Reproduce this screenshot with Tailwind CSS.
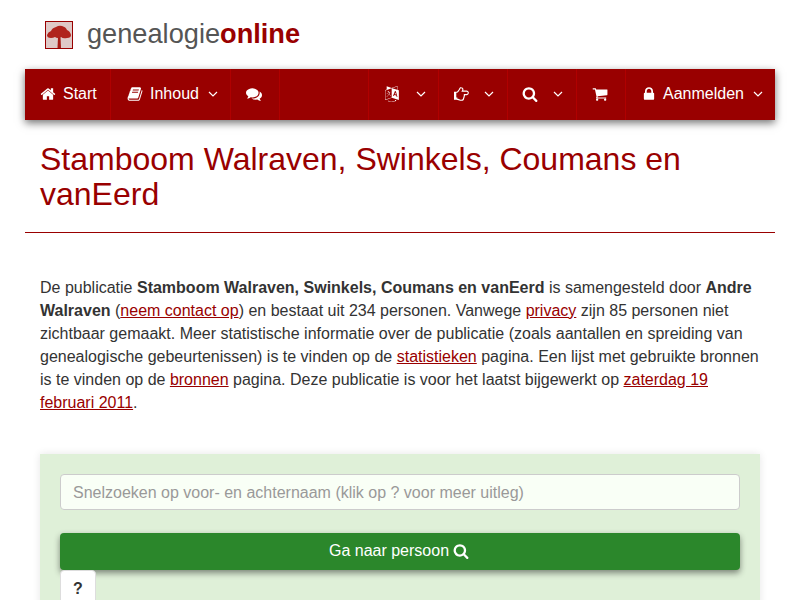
<!DOCTYPE html>
<html lang="nl">
<head>
<meta charset="utf-8">
<title>Stamboom</title>
<script src="https://cdn.jsdelivr.net/npm/@tailwindcss/browser@4"></script>
</head>
<body class="bg-white">
<div class="h-[600px] overflow-hidden font-['Liberation_Sans',Arial,sans-serif] text-[16px] leading-[23px] text-[#333]">
  <header class="h-[69px] pl-[45px] flex items-start">
    <div class="mt-[21px] w-[28px] h-[28px] border border-[#990000] bg-[#dfc9c7] flex items-center justify-center shrink-0 overflow-hidden">
      <svg viewBox="0 0 26 26" class="w-[26px] h-[26px] blur-[0.5px]"><path d="M12 15h2.500l.5 11h-3.500z" fill="#a81c16"/><path d="M1 13q1-3 4-4 1-3 5-4 3-2 6-1 4 1 5 4 3 1 4 5 0 3-4 3-4 1-6-1-2 1-3 1-2 0-3-1-2 1-4 1-4 0-4-3z" fill="#b0231c"/></svg>
    </div>
    <div class="ml-[14px] mt-[17px] text-[27.200px] leading-[34px] text-[#555]">genealogie<b class="text-[#990000]">online</b></div>
  </header>

  <nav class="mx-[25px] h-[51px] bg-[#990000] text-white flex shadow-[0_3px_8px_rgba(0,0,0,0.55)]">
    <a class="w-[86px] flex items-center pl-[15px] pb-[2px] gap-[7px] border-r border-[#b00000]">
      <svg viewBox="0 0 1792 1792" class="w-[16px] h-[16px]" fill="#fff"><path d="M1472 992v480q0 26-19 45t-45 19h-384v-384h-256v384h-384q-26 0-45-19t-19-45v-480q0-1 .5-3t.5-3l575-474 575 474q1 2 1 6zm223-69l-62 74q-8 9-21 11h-3q-13 0-21-7l-692-577-692 577q-12 8-24 7-13-2-21-11l-62-74q-8-10-7-23.500t11-21.500l719-599q32-26 76-26t76 26l244 204v-195q0-14 9-23t23-9h192q14 0 23 9t9 23v408l219 182q10 8 11 21.500t-7 23.500z"/></svg>
      <span>Start</span>
    </a>
    <a class="w-[120px] flex items-center pl-[16px] pb-[2px] border-r border-[#b00000]">
      <svg viewBox="0 0 1792 1792" class="w-[16px] h-[16px] mr-[7px]" fill="#fff"><path d="M1703 478q40 57 18 129l-275 906q-19 64-76.500 107.500t-122.500 43.500h-923q-77 0-148.500-53.500t-99.500-131.500q-24-67-2-127 0-4 3-27t4-37q1-8-3-21.500t-3-19.500q2-11 8-21t16.500-23.500 16.500-23.500q23-38 45-91.500t30-91.500q3-10 .5-30t-.5-28q3-11 17-28t17-23q21-36 42-92t25-90q1-9-2.500-32t.5-28q4-13 22-30.500t22-22.500q19-26 42.500-84.500t27.500-96.500q1-8-3-25.500t-2-26.500q2-8 9-18t18-23 17-21q8-12 16.500-30.500t15-35 16-36 19.500-32 26.500-23.500 36-11.500 47.500 5.500l-1 3q38-9 51-9h761q74 0 114 56t18 130l-274 906q-36 119-71.500 153.500t-128.500 34.500h-869q-27 0-38 15-11 16-1 43 24 70 144 70h923q29 0 56-15.500t35-41.500l300-987q7-22 5-57 38 15 59 43zm-1064 2q-4 13 2 22.500t20 9.500h608q13 0 25.500-9.500t16.500-22.500l21-64q4-13-2-22.500t-20-9.500h-608q-13 0-25.500 9.500t-16.500 22.500zm-83 256q-4 13 2 22.500t20 9.500h608q13 0 25.500-9.500t16.500-22.500l21-64q4-13-2-22.500t-20-9.500h-608q-13 0-25.500 9.500t-16.500 22.500z"/></svg>
      <span>Inhoud</span>
      <svg viewBox="0 0 10 6" class="w-[10px] h-[6px] ml-[9px]" fill="none" stroke="#fff" stroke-width="1.200"><path d="M1 1l4 4 4-4"/></svg>
    </a>
    <a class="w-[49px] flex items-center justify-center pb-[2px] pr-[2px] border-r border-[#b00000]">
      <svg viewBox="0 0 1792 1792" class="w-[16px] h-[16px]" fill="#fff"><path d="M1408 768q0 139-94 257t-256.500 186.500-353.500 68.500q-86 0-176-16-124 88-278 128-36 9-86 16h-3q-11 0-20.500-8t-11.500-21q-1-3-1-6.500t.5-6.500 2-6l2.500-5 3.500-5.500 4-5 4.500-5 4-4.500q5-6 23-25t26-29.500 22.500-29 25-38.500 20.500-44q-124-72-195-177t-71-224q0-139 94-257t256.500-186.500 353.500-68.500 353.500 68.500 256.500 186.500 94 257zm384 256q0 120-71 224.500t-195 176.500q10 24 20.500 44t25 38.500 22.500 29 26 29.500 23 25q1 1 4 4.500t4.500 5 4 5 3.500 5.500l2.500 5 2 6 .5 6.500-1 6.500q-3 14-13 22t-22 7q-50-7-86-16-154-40-278-128-90 16-176 16-271 0-472-132 58 4 88 4 161 0 309-45t264-129q125-92 192-212t67-254q0-77-23-152 129 71 204 178t75 230z"/></svg>
    </a>
    <div class="flex-1 border-r border-[#b00000]"></div>
    <a class="w-[70px] flex items-center pl-[15px] pb-[2px] border-r border-[#b00000]">
      <svg viewBox="0 0 1792 1792" class="w-[16px] h-[16px] mr-[16px]" fill="#fff"><path d="M782 1078q-1 3-12.500-.5t-31.500-11.500l-20-9q-44-20-87-49-7-5-41-31.500t-38-28.500q-67 103-134 181-81 95-105 110-4 2-19.500 4t-18.500 0q6-4 82-92 21-24 85.500-115t78.500-118q17-30 51-98.500t36-77.500q-8-1-110 33-8 2-27.500 7.500t-34.500 9.500-17 5q-2 2-2 10.500t-1 9.500q-5 10-31 15-23 7-47 0-18-4-28-21-4-6-5-23 6-2 24.500-5t29.500-6q58-16 105-32 100-35 102-35 10-2 43-19.500t44-21.500q9-3 21.500-8t14.500-5.500 6 .5q2 12-1 33 0 2-12.500 27t-26.500 53.500-17 33.500q-25 50-77 131l64 28q12 6 74.500 32t67.500 28q4 1 10.500 25.500t4.500 30.500zm-205-486q3 15-4 28-12 23-50 38-30 12-60 12-26-3-49-26-14-15-18-41l1-3q3 3 19.500 5t26.500 0 58-16q36-12 55-14 17 0 21 17zm698 129l63 227-139-42zm-1108 800l694-232v-1032l-694 233v1031zm1241-317l102 31-181-657-100-31-216 536 102 31 45-110 211 65zm-503-962l573 184v-380zm311 1323l158 13-54 160-40-66q-130 83-276 108-58 12-91 12h-84q-79 0-199.500-39t-183.500-85q-8-7-8-16 0-8 5-13.500t13-5.500q4 0 18 7.500t30.500 16.500 20.500 11q73 37 159.500 61.500t157.500 24.500q95 0 167-14.500t157-50.500q15-7 30.500-15.500t34-19 28.500-16.500zm448-1079v1079l-774-246q-14 6-375 127.500t-368 121.500q-13 0-18-13 0-1-1-3v-1078q3-9 4-10 5-6 20-11 106-35 149-50v-384l558 198q2 0 160.500-55t316-108.500 161.500-53.500q20 0 20 21v418z"/></svg>
      <svg viewBox="0 0 10 6" class="w-[10px] h-[6px]" fill="none" stroke="#fff" stroke-width="1.200"><path d="M1 1l4 4 4-4"/></svg>
    </a>
    <a class="w-[69px] flex items-center pl-[15px] pb-[2px] border-r border-[#b00000]">
      <svg viewBox="0 0 1792 1792" class="w-[16px] h-[16px] mr-[14px]" fill="#fff"><path d="M384 1344q0-26-19-45t-45-19-45 19-19 45 19 45 45 19 45-19 19-45zm1152-576q0-51-39-89.500t-89-38.500h-576q0-20 15-48.500t33-55 33-68 15-84.500q0-67-44.500-97.500t-115.500-30.500q-24 0-90 139-24 44-37 65-40 64-112 145-71 81-101 106-69 57-140 57h-32v640h32q72 0 167 32t193.500 64 179.500 32q189 0 189-167 0-26-5-56 30-16 47.500-52.500t17.500-73.500-18-69q53-50 53-119 0-25-10-55.500t-25-47.500h331q52 0 90-38t38-90zm128-1q0 105-75.500 181t-180.500 76h-169q-4 62-37 119 3 21 3 43 0 101-60 178 1 139-85 219.500t-227 80.500q-133 0-322-69-164-59-223-59h-288q-53 0-90.500-37.500t-37.500-90.500v-640q0-53 37.500-90.500t90.500-37.500h288q10 0 21.500-4.500t23.500-14 22.500-18 24-22.500 20.500-21.500 19-21.500 14-17q65-74 100-129 13-21 33-62t37-72 40.500-63 55-49.500 69.500-17.500q125 0 206.500 67t81.500 189q0 68-22 128h374q104 0 180 76t76 179z"/></svg>
      <svg viewBox="0 0 10 6" class="w-[10px] h-[6px]" fill="none" stroke="#fff" stroke-width="1.200"><path d="M1 1l4 4 4-4"/></svg>
    </a>
    <a class="w-[69px] flex items-center pl-[14px] pb-[2px] border-r border-[#b00000]">
      <svg viewBox="0 0 1792 1792" class="w-[16px] h-[16px] mr-[15px]" fill="#fff"><path d="M1216 832q0-185-131.500-316.500t-316.500-131.500-316.500 131.500-131.500 316.500 131.500 316.500 316.500 131.500 316.500-131.500 131.500-316.500zm512 832q0 52-38 90t-90 38q-54 0-90-38l-343-342q-179 124-399 124-143 0-273.500-55.500t-225-150-150-225-55.500-273.500 55.500-273.500 150-225 225-150 273.500-55.500 273.500 55.500 225 150 150 225 55.500 273.500q0 220-124 399l343 343q37 37 37 90z"/></svg>
      <svg viewBox="0 0 10 6" class="w-[10px] h-[6px]" fill="none" stroke="#fff" stroke-width="1.200"><path d="M1 1l4 4 4-4"/></svg>
    </a>
    <a class="w-[49px] flex items-center pl-[15px] pb-[2px] border-r border-[#b00000]">
      <svg viewBox="0 0 1792 1792" class="w-[16px] h-[16px]" fill="#fff"><path d="M704 1536q0 52-38 90t-90 38-90-38-38-90 38-90 90-38 90 38 38 90zm896 0q0 52-38 90t-90 38-90-38-38-90 38-90 90-38 90 38 38 90zm128-1088v512q0 24-16.500 42.500t-40.500 21.500l-1044 122q13 60 13 70 0 16-24 64h920q26 0 45 19t19 45-19 45-45 19h-1024q-26 0-45-19t-19-45q0-11 8-31.500t16-36 21.500-40 15.500-29.500l-177-823h-204q-26 0-45-19t-19-45 19-45 45-19h256q16 0 28.500 6.500t19.500 15.500 13 24.500 8 26 5.500 29.500 4.500 26h1201q26 0 45 19t19 45z"/></svg>
    </a>
    <a class="w-[149px] flex items-center pl-[15px] pb-[2px]">
      <svg viewBox="0 0 1792 1792" class="w-[16px] h-[16px] mr-[6px]" fill="#fff"><path d="M640 768h512v-192q0-106-75-181t-181-75-181 75-75 181v192zm832 96v576q0 40-28 68t-68 28h-960q-40 0-68-28t-28-68v-576q0-40 28-68t68-28h32v-192q0-184 132-316t316-132 316 132 132 316v192h32q40 0 68 28t28 68z"/></svg>
      <span>Aanmelden</span>
      <svg viewBox="0 0 10 6" class="w-[10px] h-[6px] ml-[9px]" fill="none" stroke="#fff" stroke-width="1.200"><path d="M1 1l4 4 4-4"/></svg>
    </a>
  </nav>

  <section class="mx-[25px] h-[113px] border-b border-[#990000] px-[15px] pt-[22px]">
    <h1 class="text-[32px] leading-[35px] text-[#990000] font-normal">Stamboom Walraven, Swinkels, Coumans en vanEerd</h1>
  </section>

  <p class="mt-[43px] mx-[40px] w-[720px]">De publicatie <b>Stamboom Walraven, Swinkels, Coumans en vanEerd</b> is samengesteld door <b>Andre Walraven</b> (<a class="text-[#990000] underline">neem contact op</a>) en bestaat uit 234 personen. Vanwege <a class="text-[#990000] underline">privacy</a> zijn 85 personen niet zichtbaar gemaakt. Meer statistische informatie over de publicatie (zoals aantallen en spreiding van genealogische gebeurtenissen) is te vinden op de <a class="text-[#990000] underline">statistieken</a> pagina. Een lijst met gebruikte bronnen is te vinden op de <a class="text-[#990000] underline">bronnen</a> pagina. Deze publicatie is voor het laatst bijgewerkt op <a class="text-[#990000] underline">zaterdag 19 februari 2011</a>.</p>

  <section class="mt-[40px] mx-[40px] bg-[#dff0d8] px-[20px] pt-[20px] h-[200px] shadow-[0_0_8px_rgba(0,0,0,0.1)]">
    <div class="h-[36px] bg-[#f9fff6] border border-[#ccc] rounded-[4px] px-[12px] flex items-center text-[#999]">Snelzoeken op voor- en achternaam (klik op ? voor meer uitleg)</div>
    <div class="mt-[23px] h-[37px] bg-[#2b872b] rounded-[4px] text-white flex items-center justify-center gap-[4px] pr-[2px] pb-[2px] shadow-[0_3px_6px_rgba(0,0,0,0.45)]">
      <span>Ga naar persoon</span>
      <svg viewBox="0 0 1792 1792" class="w-[16px] h-[16px]" fill="#fff"><path d="M1216 832q0-185-131.500-316.500t-316.500-131.500-316.500 131.500-131.500 316.500 131.500 316.500 316.500 131.500 316.500-131.500 131.500-316.500zm512 832q0 52-38 90t-90 38q-54 0-90-38l-343-342q-179 124-399 124-143 0-273.500-55.500t-225-150-150-225-55.500-273.500 55.500-273.500 150-225 225-150 273.500-55.500 273.500 55.500 225 150 150 225 55.500 273.500q0 220-124 399l343 343q37 37 37 90z"/></svg>
    </div>
    <div class="w-[36px] h-[36px] bg-white border border-[#ddd] rounded-[4px] flex items-center justify-center font-bold text-[#333]">?</div>
  </section>
</div>
</body>
</html>
